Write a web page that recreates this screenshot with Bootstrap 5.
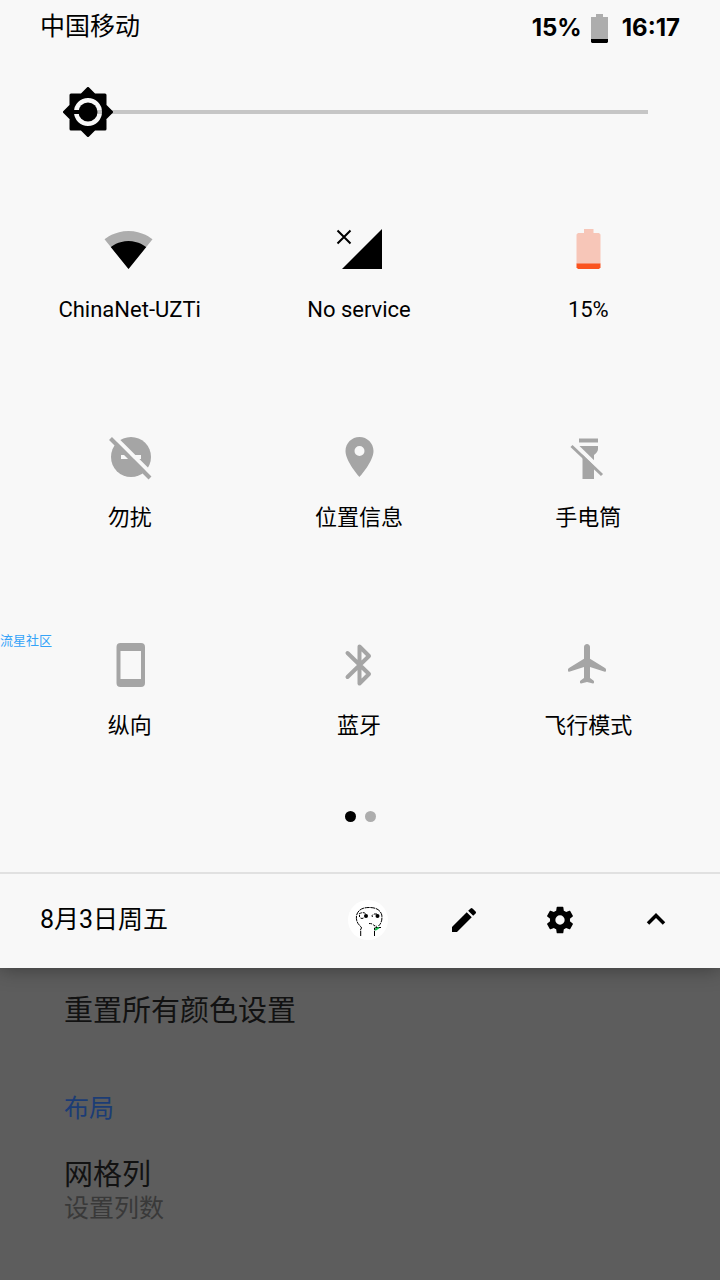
<!DOCTYPE html>
<html lang="zh-CN">
<head>
<meta charset="utf-8">
<meta name="viewport" content="width=device-width, initial-scale=1">
<title>快捷设置</title>
<link rel="stylesheet" href="https://cdn.jsdelivr.net/npm/bootstrap@5.3.0/dist/css/bootstrap.min.css">
<style>
  body { background: #5d5d5d; color: #000; font-family: Roboto, "Noto Sans CJK SC", sans-serif; }
  .cjk { font-family: "Noto Sans CJK SC", sans-serif; }
  .shade { background: #f8f8f8; box-shadow: 0 0 20px rgba(0, 0, 0, .4); }
  .status { height: 56px; padding: 0 40px; }
  .carrier { font-size: 25px; line-height: 48px; }
  .clock { font-family: Inter, sans-serif; font-size: 24px; font-weight: 700; line-height: 58px; }
  .clock svg { margin: 0 12px 0 8px; }
  .brightness { padding: 31px 72px 35px 63px; }
  .slider { appearance: none; -webkit-appearance: none; width: 100%; height: 50px; background: transparent; margin: 0; }
  .slider::-webkit-slider-runnable-track { height: 4px; background: linear-gradient(90deg, transparent 6px, #000 6px 25px, #c6c6c6 25px); }
  .slider::-webkit-slider-thumb { -webkit-appearance: none; width: 50px; height: 50px; margin-top: -23px;
    background: url("data:image/svg+xml,%3Csvg xmlns='http://www.w3.org/2000/svg' viewBox='0 0 50 50'%3E%3Cpath fill-rule='evenodd' stroke='%23000' stroke-width='3' stroke-linejoin='round' d='M25 1.500l6.500 6.500H42V18.500L48.500 25l-6.500 6.500V42H31.500L25 48.500l-6.500-6.500H8V31.500L1.500 25l6.500-6.500V8H18.500zM25 9.500a15.500 15.500 0 1 0 0 31a15.500 15.500 0 1 0 0-31z'/%3E%3Ccircle cx='25' cy='25' r='9.500'/%3E%3C/svg%3E") center / 100% no-repeat; }
  .tiles { padding: 0 17px 0 15px; }
  .tile { height: 208px; gap: 20px; font-size: 22px; line-height: 32px; color: #000; }
  .tile svg { width: 56px; height: 48px; }
  .off { fill: #a5a5a5; stroke: #a5a5a5; stroke-width: 0; }
  .dots { height: 40px; gap: 9px; margin-bottom: 36px; }
  .dot { width: 11px; height: 11px; background: #000; }
  .dot-off { background: #adadad; }
  .foot { height: 96px; border-top: 2px solid #e1e1e1; padding: 0 16px 2px 40px; font-size: 25px; }
  .foot .btn { width: 96px; height: 64px; }
  .day { line-height: 36px; }
  .prefs { padding: 25px 64px 56px; }
  .pref-title { font-size: 29px; line-height: 36px; color: #121212; }
  .pref-note { font-size: 25px; line-height: 32px; color: #393939; }
  .pref-head { font-size: 25px; line-height: 32px; color: #1b3c75; margin: 64px 0 32px; }
  .stamp { left: 0; top: 630px; font-size: 13px; line-height: 20px; color: #35a3f8; }
</style>
</head>
<body>
<main>
  <section class="shade position-relative">
    <header class="status d-flex justify-content-between">
      <span class="carrier cjk">中国移动</span>
      <div class="clock d-flex align-items-center">
        <span>15%</span>
        <svg width="20" height="30" viewBox="0 0 20 30" aria-hidden="true"><path fill="#adadad" d="M6 1h7v3h5v23H1V4h5z"/><path d="M1 26h17v3l-1 1H2l-1-1z"/></svg>
        <span>16:17</span>
      </div>
    </header>

    <div class="brightness d-flex">
      <input class="slider" type="range" min="0" max="100" value="0" aria-label="亮度">
    </div>

    <div class="tiles">
      <div class="row g-0">
        <div class="col-4"><button type="button" class="tile btn border-0 p-0 w-100 d-flex flex-column align-items-center justify-content-center">
          <svg viewBox="0 0 56 48"><path fill="#adadad" transform="translate(1.800 -1.200) scale(2.060)" d="M12.010 21.490L23.640 7c-.45-.34-4.930-4-11.640-4C5.280 3 .81 6.660.36 7z"/><path transform="translate(8.200 10.300) scale(1.525)" d="M12.010 21.490L23.640 7c-.45-.34-4.930-4-11.640-4C5.280 3 .81 6.660.36 7z"/></svg>
          <span>ChinaNet-UZTi</span></button></div>
        <div class="col-4"><button type="button" class="tile btn border-0 p-0 w-100 d-flex flex-column align-items-center justify-content-center">
          <svg viewBox="0 0 56 48"><path d="M51 3v40H11z"/><path stroke="#000" stroke-width="2" d="M6.500 4.500l13 13m0-13l-13 13"/></svg>
          <span>No service</span></button></div>
        <div class="col-4"><button type="button" class="tile btn border-0 p-0 w-100 d-flex flex-column align-items-center justify-content-center">
          <svg viewBox="0 0 56 48"><path fill="#f7c6b8" d="M24 3h9.500v4H39l1.500 1.500V38h-24V8.500L18 7h6z"/><path fill="#fa531f" d="M16.500 37.500h24v4L39 43H18l-1.500-1.500z"/></svg>
          <span>15%</span></button></div>

        <div class="col-4"><button type="button" class="tile btn border-0 p-0 w-100 d-flex flex-column align-items-center justify-content-center">
          <svg class="off" viewBox="0 0 56 48"><circle cx="29" cy="23" r="20"/><path fill="#f8f8f8" d="M19 21h20v4H19z"/><path stroke="#f8f8f8" stroke-width="4" d="M8 -1.500l46 46"/><path stroke-width="4" d="M8.500 4.500l39.500 39.500"/></svg>
          <span>勿扰</span></button></div>
        <div class="col-4"><button type="button" class="tile btn border-0 p-0 w-100 d-flex flex-column align-items-center justify-content-center">
          <svg class="off" viewBox="0 0 56 48"><path fill-rule="evenodd" transform="translate(4.500 -1) scale(2)" d="M12 2C8.130 2 5 5.130 5 9c0 5.250 7 13 7 13s7-7.750 7-13c0-3.870-3.130-7-7-7zm0 9.500a2.500 2.500 0 0 1 0-5 2.500 2.500 0 0 1 0 5z"/></svg>
          <span>位置信息</span></button></div>
        <div class="col-4"><button type="button" class="tile btn border-0 p-0 w-100 d-flex flex-column align-items-center justify-content-center">
          <svg class="off" viewBox="0 0 56 48"><path d="M19 4.500h19v4H19zM19 12h19v3q0 3-4 6v24H22.500V20z"/><path stroke="#f8f8f8" stroke-width="4" d="M14 9.500l23 22.500"/><path stroke-width="3" d="M11.500 12l30.500 29"/></svg>
          <span>手电筒</span></button></div>

        <div class="col-4"><button type="button" class="tile btn border-0 p-0 w-100 d-flex flex-column align-items-center justify-content-center">
          <svg class="off" viewBox="0 0 56 48"><path fill-rule="evenodd" d="M18.500 1h20.500q4 0 4 4v36q0 4-4 4H18.500q-4 0-4-4V5q0-4 4-4zM18.500 9v28h20.500V9z"/></svg>
          <span>纵向</span></button></div>
        <div class="col-4"><button type="button" class="tile btn border-0 p-0 w-100 d-flex flex-column align-items-center justify-content-center">
          <svg class="off" viewBox="0 0 56 48"><path style="fill:none;stroke-width:4" stroke-linecap="round" stroke-linejoin="round" d="M16.500 11L38 32l-9.500 9.500v-37L38 14 16.500 35"/></svg>
          <span>蓝牙</span></button></div>
        <div class="col-4"><button type="button" class="tile btn border-0 p-0 w-100 d-flex flex-column align-items-center justify-content-center">
          <svg class="off" viewBox="0 0 56 48"><path transform="translate(4 -2) scale(2)" d="M21 15.400V14.800q0-.5-.5-.8L13 9.400V3.500C13 2.670 12.330 2 11.500 2S10 2.670 10 3.500V9.400l-7.500 4.600q-.5.3-.5.8v.6q0 .6.6.5L10 13.500V19l-1.700 1.200q-.3.200-.3.600v.5q0 .5.5.4L11.500 21l3 .7q.5.100.5-.4v-.5q0-.4-.3-.6L13 19v-5.500l7.400 2.400q.6.100.6-.5z"/></svg>
          <span>飞行模式</span></button></div>
      </div>
    </div>

    <div class="dots d-flex justify-content-center align-items-center">
      <span class="dot rounded-circle"></span><span class="dot dot-off rounded-circle"></span>
    </div>

    <footer class="foot d-flex align-items-center">
      <span class="day me-auto">8月3日周五</span>
      <button type="button" class="btn border-0 p-0" aria-label="用户">
        <svg width="40" height="40" viewBox="0 0 40 40"><circle cx="20" cy="20" r="20" fill="#fff"/>
          <g fill="none" stroke="#000"><path stroke-dasharray="5 .7" d="M12.700 36v-7l1-1-1.500-2C9 23 8 20 8.500 15.500 10 9.500 15 7.500 21 7.500S32 9 33.800 15c.5 5-.3 8-3.300 11M26.500 36v-8l4-.5"/><path stroke-dasharray="3 1" d="M11 14q4-2.500 6.500-.500M12.500 18q1.500 1 3 0M11.500 15v2M25 14.500q-2 1.500 0 3M26 14h4M21 23.500q4 0 5 2l3 1"/></g>
          <circle cx="18" cy="16" r="2"/><circle cx="29.500" cy="16" r="2"/><path d="M28 27.500h5" stroke="#000"/><path d="M27 30l4-2.500" stroke="#18bd4e" stroke-width="2"/></svg>
      </button>
      <button type="button" class="btn border-0 p-0" aria-label="编辑">
        <svg width="32" height="32" viewBox="0 0 24 24"><path d="M3 17.250V21h3.750L17.810 9.940l-3.750-3.750L3 17.250zM20.710 7.040a1 1 0 0 0 0-1.410l-2.340-2.340a1 1 0 0 0-1.410 0l-1.830 1.830 3.750 3.750 1.830-1.830z"/></svg>
      </button>
      <button type="button" class="btn border-0 p-0" aria-label="设置">
        <svg width="32" height="32" viewBox="0 0 24 24"><path d="M19.430 12.980c.04-.32.070-.64.070-.98s-.03-.66-.07-.98l2.110-1.650c.19-.15.240-.42.120-.64l-2-3.460c-.12-.22-.39-.3-.61-.22l-2.490 1c-.52-.4-1.080-.73-1.690-.98l-.38-2.650C14.460 2.180 14.250 2 14 2h-4c-.25 0-.46.180-.49.420l-.38 2.650c-.61.250-1.170.59-1.690.98l-2.490-1c-.23-.09-.49 0-.61.220l-2 3.460c-.13.220-.07.490.12.640l2.110 1.650c-.04.320-.07.650-.07.980s.030.660.070.980l-2.110 1.650c-.19.150-.24.420-.12.640l2 3.460c.12.220.39.300.61.220l2.490-1c.52.400 1.080.730 1.690.980l.38 2.650c.03.240.24.420.49.420h4c.25 0 .46-.18.49-.42l.38-2.650c.61-.25 1.170-.59 1.690-.98l2.490 1c.23.090.49 0 .61-.22l2-3.460c.12-.22.070-.49-.12-.64l-2.110-1.650zM12 15.500a3.500 3.500 0 1 1 0-7 3.500 3.500 0 0 1 0 7z"/></svg>
      </button>
      <button type="button" class="btn border-0 p-0" aria-label="收起">
        <svg width="32" height="32" viewBox="0 0 32 32"><path fill="none" stroke="#000" stroke-width="3.500" d="M8 19.500l8-8 8 8"/></svg>
      </button>
    </footer>
    <span class="stamp cjk position-absolute">流星社区</span>
  </section>

  <section class="prefs">
    <div class="pref-title">重置所有颜色设置</div>
    <div class="pref-head">布局</div>
    <div class="pref-title">网格列</div>
    <div class="pref-note">设置列数</div>
  </section>
</main>
<script src="https://cdn.jsdelivr.net/npm/bootstrap@5.3.0/dist/js/bootstrap.bundle.min.js"></script>
</body>
</html>
